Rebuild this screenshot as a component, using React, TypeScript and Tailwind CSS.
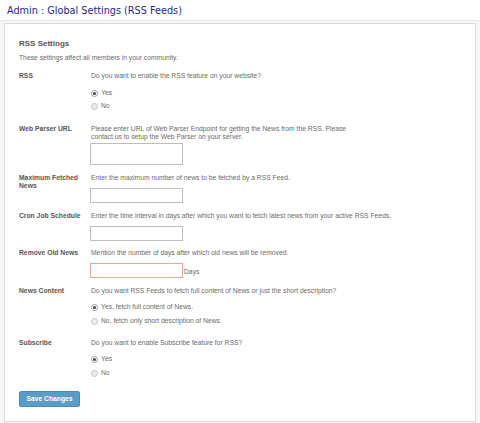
import React from "react";

function Radio({ checked, label }: { checked?: boolean; label: string }) {
  return (
    <div className="flex items-center h-[8px]">
      <span
        className={
          checked
            ? "w-[7px] h-[7px] rounded-full border border-[#9a9a9a] bg-white flex items-center justify-center"
            : "w-[7px] h-[7px] rounded-full border border-[#c4c4c4] bg-[#ececec]"
        }
      >
        {checked && <span className="w-[3px] h-[3px] rounded-full bg-[#444]" />}
      </span>
      <span className="ml-[3px]">{label}</span>
    </div>
  );
}

function Row({
  label,
  className,
  children,
}: {
  label: React.ReactNode;
  className: string;
  children: React.ReactNode;
}) {
  return (
    <div className={"flex " + className}>
      <div className="w-[71px] shrink-0 font-bold text-[#555]">{label}</div>
      <div className="flex-1 pl-[1px]">{children}</div>
    </div>
  );
}

const Line = ({ children }: { children: React.ReactNode }) => (
  <div className="h-[8px] whitespace-nowrap">{children}</div>
);

export default function App() {
  return (
    <div className="min-h-screen bg-[#f6f6f6] font-['Liberation_Sans',Arial,sans-serif]">
      <div className="h-[21px] bg-white border-b border-[#e8e8e8] pl-[7px] leading-[21px] text-[9.7px] text-[#26268c] font-['DejaVu_Sans',sans-serif]">
        Admin : Global Settings (RSS Feeds)
      </div>
      <div className="mx-[4px] mt-[2px] bg-white border border-[#dcdcdc] pl-[14px] pt-[15px] pb-[14px] text-[6.75px] leading-[8px] text-[#6a6a6a]">
        <div className="text-[8px] leading-[10px] font-bold text-[#555]">RSS Settings</div>
        <div className="mt-[5px]">
          <Line>These settings affect all members in your community.</Line>
        </div>

        <Row label={<Line>RSS</Line>} className="mt-[10px]">
          <Line>Do you want to enable the RSS feature on your website?</Line>
          <div className="mt-[9px]">
            <Radio checked label="Yes" />
          </div>
          <div className="mt-[5px]">
            <Radio label="No" />
          </div>
        </Row>

        <Row label={<Line>Web Parser URL</Line>} className="mt-[15px]">
          <Line>
            Please enter URL of Web Parser Endpoint for getting the News from the RSS. Please
          </Line>
          <Line>contact us to setup the Web Parser on your server.</Line>
          <div className="mt-[2px] -ml-[1px] w-[93px] h-[22px] border border-[#bdbdbd] bg-white" />
        </Row>

        <Row
          label={
            <>
              <Line>Maximum Fetched</Line>
              <Line>News</Line>
            </>
          }
          className="mt-[9px]"
        >
          <Line>Enter the maximum number of news to be fetched by a RSS Feed.</Line>
          <div className="mt-[6px] -ml-[1px] w-[93px] h-[15px] border border-[#bdbdbd] bg-white" />
        </Row>

        <Row label={<Line>Cron Job Schedule</Line>} className="mt-[9px]">
          <Line>
            Enter the time interval in days after which you want to fetch latest news from your
            active RSS Feeds.
          </Line>
          <div className="mt-[6px] -ml-[1px] w-[93px] h-[15px] border border-[#bdbdbd] bg-white" />
        </Row>

        <Row label={<Line>Remove Old News</Line>} className="mt-[8px]">
          <Line>Mention the number of days after which old news will be removed.</Line>
          <div className="mt-[6px] -ml-[1px] flex items-end">
            <div className="w-[93px] h-[15px] border border-[#eaa597] bg-white" />
            <span className="ml-[1px] mb-[2px] leading-[8px]">Days</span>
          </div>
        </Row>

        <Row label={<Line>News Content</Line>} className="mt-[9px]">
          <Line>Do you want RSS Feeds to fetch full content of News or just the short description?</Line>
          <div className="mt-[8px]">
            <Radio checked label="Yes, fetch full content of News." />
          </div>
          <div className="mt-[6px]">
            <Radio label="No, fetch only short description of News." />
          </div>
        </Row>

        <Row label={<Line>Subscribe</Line>} className="mt-[14px]">
          <Line>Do you want to enable Subscribe feature for RSS?</Line>
          <div className="mt-[8px]">
            <Radio checked label="Yes" />
          </div>
          <div className="mt-[6px]">
            <Radio label="No" />
          </div>
        </Row>

        <button className="mt-[14px] w-[61px] h-[16px] bg-[#5b9bc8] border border-[#4b89b6] rounded-[2px] text-white font-bold text-[6.75px] leading-[14px]">
          Save Changes
        </button>
      </div>
    </div>
  );
}
